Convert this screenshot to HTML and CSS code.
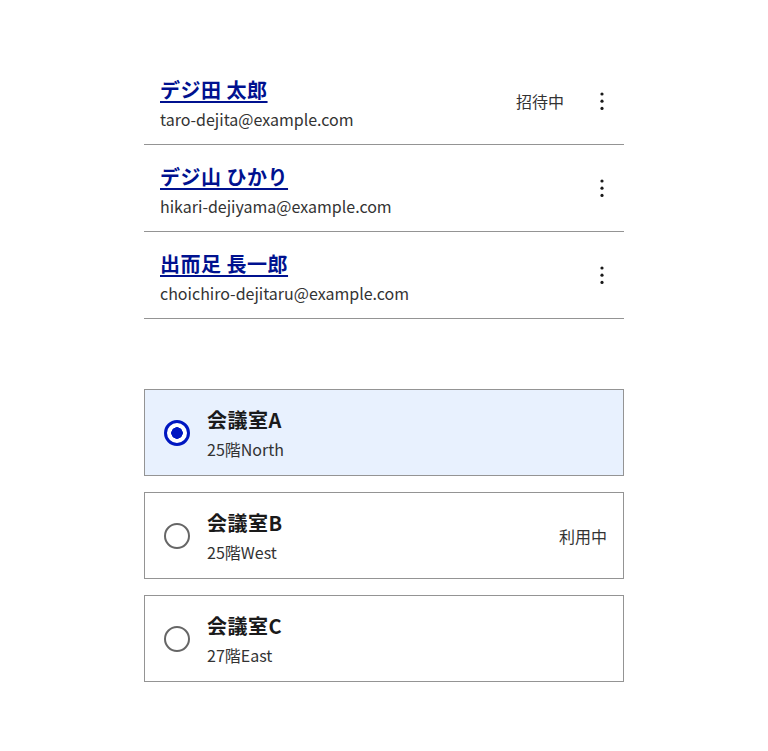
FILE: index.html
```html
<!DOCTYPE html>
<html lang="ja">
<head>
<meta charset="utf-8">
<link rel="stylesheet" href="styles.css">
</head>
<body>
<main class="page">
  <ul class="members">
    <li class="member">
      <div class="member-info">
        <a class="member-name" href="#">デジ田 太郎</a>
        <span class="member-email">taro-dejita@example.com</span>
      </div>
      <span class="member-status">招待中</span>
      <button class="more" aria-label="メニュー">
        <svg width="24" height="24" viewBox="0 0 24 24"><circle cx="12" cy="5" r="1.6"/><circle cx="12" cy="12.2" r="1.6"/><circle cx="12" cy="19.4" r="1.6"/></svg>
      </button>
    </li>
    <li class="member">
      <div class="member-info">
        <a class="member-name" href="#">デジ山 ひかり</a>
        <span class="member-email">hikari-dejiyama@example.com</span>
      </div>
      <button class="more" aria-label="メニュー">
        <svg width="24" height="24" viewBox="0 0 24 24"><circle cx="12" cy="5" r="1.6"/><circle cx="12" cy="12.2" r="1.6"/><circle cx="12" cy="19.4" r="1.6"/></svg>
      </button>
    </li>
    <li class="member">
      <div class="member-info">
        <a class="member-name" href="#">出而足 長一郎</a>
        <span class="member-email">choichiro-dejitaru@example.com</span>
      </div>
      <button class="more" aria-label="メニュー">
        <svg width="24" height="24" viewBox="0 0 24 24"><circle cx="12" cy="5" r="1.6"/><circle cx="12" cy="12.2" r="1.6"/><circle cx="12" cy="19.4" r="1.6"/></svg>
      </button>
    </li>
  </ul>

  <div class="rooms">
    <label class="room room-selected">
      <span class="radio radio-checked"></span>
      <span class="room-info">
        <span class="room-name">会議室A</span>
        <span class="room-floor">25階North</span>
      </span>
    </label>
    <label class="room">
      <span class="radio"></span>
      <span class="room-info">
        <span class="room-name">会議室B</span>
        <span class="room-floor">25階West</span>
      </span>
      <span class="room-status">利用中</span>
    </label>
    <label class="room">
      <span class="radio"></span>
      <span class="room-info">
        <span class="room-name">会議室C</span>
        <span class="room-floor">27階East</span>
      </span>
    </label>
  </div>
</main>
</body>
</html>
```
FILE: styles.css
```css
* { box-sizing: border-box; }
html, body { margin: 0; padding: 0; background: #fff; }
body {
  font-family: "Noto Sans CJK JP", "Noto Sans", sans-serif;
  color: #1a1a1a;
}
.page {
  width: 480px;
  margin: 0 auto;
  padding-top: 58px;
  display: flex;
  flex-direction: column;
  gap: 70px;
}
.members {
  list-style: none;
  margin: 0;
  padding: 0;
}
.member {
  display: flex;
  align-items: center;
  height: 87px;
  padding-left: 16px;
  border-bottom: 1px solid #949494;
}
.member-info {
  flex: 1;
  display: flex;
  flex-direction: column;
  gap: 2px;
  padding-top: 4px;
}
.member-name {
  align-self: flex-start;
  font-size: 20px;
  font-weight: 700;
  line-height: 1.5;
  letter-spacing: 0.5px;
  color: #00118f;
  text-decoration: underline;
  text-decoration-thickness: 1.5px;
  text-underline-offset: 3px;
}
.member-email {
  font-size: 16px;
  line-height: 1.5;
  color: #333;
}
.member-status {
  font-size: 16px;
  line-height: 1.5;
  color: #333;
  margin-right: 16px;
}
.more {
  width: 44px;
  height: 44px;
  border: 0;
  padding: 0;
  background: none;
  display: flex;
  align-items: center;
  justify-content: center;
  fill: #1a1a1a;
}
.rooms {
  display: flex;
  flex-direction: column;
  gap: 16px;
}
.room {
  display: flex;
  align-items: center;
  gap: 14px;
  height: 87px;
  padding: 0 16px;
  border: 1px solid #949494;
  background: #fff;
}
.room-selected { background: #e8f1fe; }
.radio {
  width: 32px;
  height: 32px;
  display: flex;
  align-items: center;
  justify-content: center;
  flex-shrink: 0;
}
.radio::before {
  content: "";
  width: 26px;
  height: 26px;
  border-radius: 50%;
  border: 2px solid #666;
  box-sizing: border-box;
}
.radio-checked::before {
  border: 3px solid #0017c1;
  background: radial-gradient(circle, #0017c1 0 5.5px, #fff 6px);
}
.room-info {
  flex: 1;
  display: flex;
  flex-direction: column;
  gap: 2px;
}
.room-name {
  font-size: 20px;
  font-weight: 700;
  line-height: 1.5;
  letter-spacing: 0.5px;
  color: #1a1a1a;
}
.room-floor {
  font-size: 16px;
  line-height: 1.5;
  color: #333;
}
.room-status {
  font-size: 16px;
  line-height: 1.5;
  color: #333;
}
```
